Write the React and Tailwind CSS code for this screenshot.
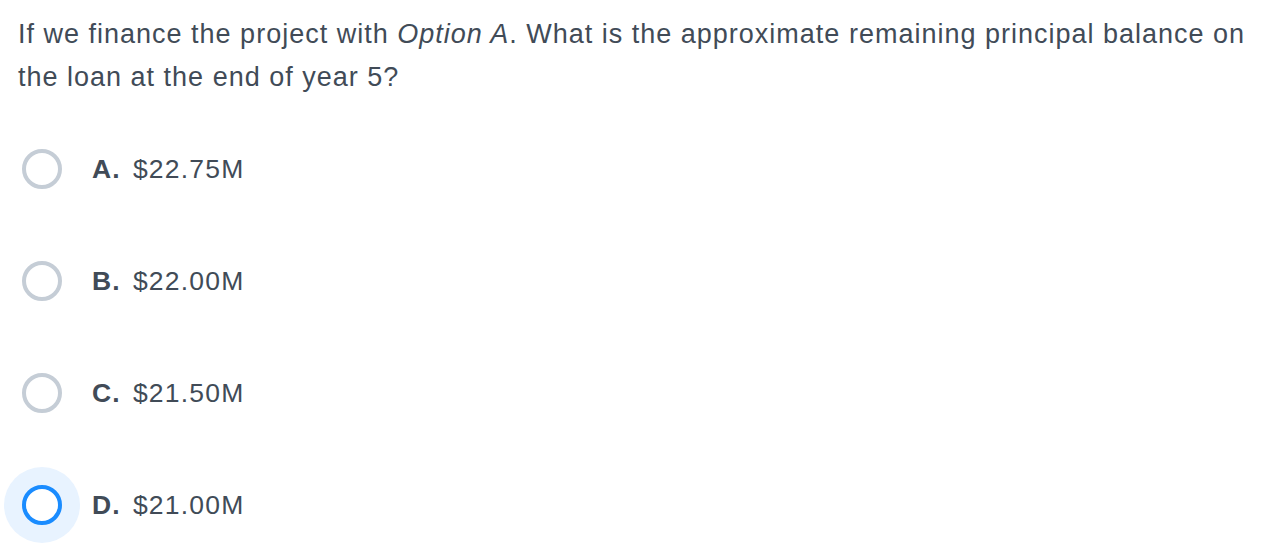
import React from "react";

const options = [
  { letter: "A.", value: "$22.75M", selected: false },
  { letter: "B.", value: "$22.00M", selected: false },
  { letter: "C.", value: "$21.50M", selected: false },
  { letter: "D.", value: "$21.00M", selected: true },
];

export default function App() {
  return (
    <div className="w-[1264px] h-[548px] bg-white overflow-hidden pl-[4px] pt-[13px] text-[#414b57]" style={{ fontFamily: '"Liberation Sans", Arial, sans-serif' }}>
      <p className="pl-[14px] text-[27px] leading-[43px] tracking-[1px]">
        If we finance the project with <i>Option A</i>. What is the approximate remaining principal balance on the loan at the end of year 5?
      </p>
      <div className="mt-[14px] flex flex-col">
        {options.map((o) => (
          <div key={o.letter} className="flex items-center h-[112px]">
            <div className={`w-[76px] h-[76px] rounded-full flex items-center justify-center ${o.selected ? "bg-[#e8f3ff]" : ""}`}>
              <div className={`w-[40px] h-[40px] rounded-full border-4 bg-white ${o.selected ? "border-[#1a8cff]" : "border-[#c5cdd6]"}`} />
            </div>
            <div className="ml-[12px] text-[26.5px] leading-none tracking-[1.2px] flex items-center">
              <span className="font-bold mr-[12px]">{o.letter}</span>
              <span>{o.value}</span>
            </div>
          </div>
        ))}
      </div>
    </div>
  );
}
